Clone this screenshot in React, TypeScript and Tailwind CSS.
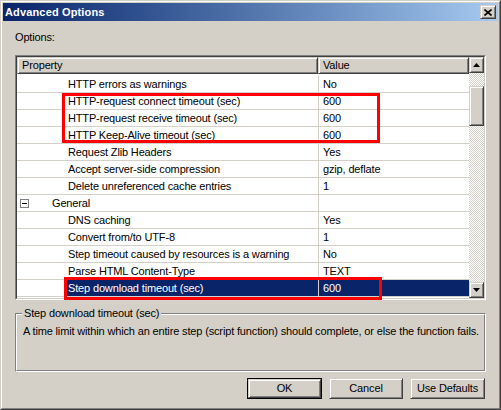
import React from 'react';

type Row = {
  label: string;
  value?: string;
  category?: boolean;
  selected?: boolean;
};

const rows: Row[] = [
  { label: 'HTTP errors as warnings', value: 'No' },
  { label: 'HTTP-request connect timeout (sec)', value: '600' },
  { label: 'HTTP-request receive timeout (sec)', value: '600' },
  { label: 'HTTP Keep-Alive timeout (sec)', value: '600' },
  { label: 'Request Zlib Headers', value: 'Yes' },
  { label: 'Accept server-side compression', value: 'gzip, deflate' },
  { label: 'Delete unreferenced cache entries', value: '1' },
  { label: 'General', category: true },
  { label: 'DNS caching', value: 'Yes' },
  { label: 'Convert from/to UTF-8', value: '1' },
  { label: 'Step timeout caused by resources is a warning', value: 'No' },
  { label: 'Parse HTML Content-Type', value: 'TEXT' },
  { label: 'Step download timeout (sec)', value: '600', selected: true },
];

const raised =
  'border border-t-[#d4d0c8] border-l-[#d4d0c8] border-b-[#404040] border-r-[#404040] shadow-[inset_1px_1px_0_#ffffff,inset_-1px_-1px_0_#808080] bg-[#d4d0c8]';

const checker = 'bg-[repeating-conic-gradient(#d4d0c8_0_25%,#ffffff_0_50%)] bg-[length:2px_2px]';

const Arrow: React.FC<{ down?: boolean }> = ({ down }) => (
  <svg width="7" height="4" viewBox="0 0 7 4">
    {down ? <path d="M0 0h7L3.5 4z" fill="#000" /> : <path d="M0 4h7L3.5 0z" fill="#000" />}
  </svg>
);

const App: React.FC = () => {
  return (
    <div className="w-[501px] h-[410px] bg-[#d4d0c8] font-['Liberation_Sans',Arial,sans-serif] text-[11px] leading-[13px] tracking-[-0.15px] text-black relative">
      <div className="h-full border border-t-[#d4d0c8] border-l-[#d4d0c8] border-b-[#404040] border-r-[#404040]">
        <div className="h-full border border-t-white border-l-white border-b-[#808080] border-r-[#808080] p-px flex flex-col">
          {/* title bar */}
          <div className="h-[18px] bg-gradient-to-r from-[#0a246a] to-[#a6caf0] flex items-center justify-between pl-[2px] pr-[2px]">
            <span className="text-white font-bold tracking-[0.15px]">Advanced Options</span>
            <div className={`w-[16px] h-[14px] flex items-center justify-center ${raised}`}>
              <svg width="8" height="7" viewBox="0 0 8 7">
                <path d="M0.5 0.5l7 6M7.5 0.5l-7 6" stroke="#000" strokeWidth="1.6" />
              </svg>
            </div>
          </div>

          <div className="px-[12px] flex flex-col">
            <div className="mt-[10px] h-[13px]">Options:</div>

            {/* property grid */}
            <div className="mt-[11px] h-[245px] border border-t-[#808080] border-l-[#808080] border-b-white border-r-white">
              <div className="h-full border border-t-[#404040] border-l-[#404040] border-b-[#d4d0c8] border-r-[#d4d0c8] bg-white flex">
                <div className="w-[452px] flex flex-col">
                  <div className="flex h-[17px]">
                    <div className={`w-[301px] pl-[4px] flex items-center ${raised}`}>Property</div>
                    <div className={`w-[151px] pl-[4px] flex items-center ${raised}`}>Value</div>
                  </div>
                  <div className="h-[2px]" />
                  {rows.map((row) => (
                    <div key={row.label} className="flex h-[17px] border-b border-[#d4d0c8]">
                      <div className="w-[301px] flex items-center">
                        {row.category ? (
                          <>
                            <div className="ml-[3px] w-[9px] h-[9px] border border-[#808080] bg-white flex items-center justify-center">
                              <div className="w-[5px] h-px bg-black" />
                            </div>
                            <span className="ml-[23px] pt-px">{row.label}</span>
                          </>
                        ) : (
                          <div
                            className={`ml-[48px] flex-1 h-full pl-[3px] pt-px flex items-center whitespace-nowrap ${
                              row.selected ? 'bg-[#0a246a] text-white' : ''
                            }`}
                          >
                            {row.label}
                          </div>
                        )}
                      </div>
                      <div
                        className={`w-[151px] border-l border-[#d4d0c8] pl-[4px] pt-px flex items-center ${
                          row.selected ? 'bg-[#0a246a] text-white' : ''
                        }`}
                      >
                        {row.value}
                      </div>
                    </div>
                  ))}
                </div>
                {/* scrollbar */}
                <div className="w-[16px] flex flex-col">
                  <div className={`h-[16px] flex items-center justify-center ${raised}`}>
                    <Arrow />
                  </div>
                  <div className={`h-[13px] ${checker}`} />
                  <div className={`h-[40px] ${raised}`} />
                  <div className={`flex-1 ${checker}`} />
                  <div className={`h-[16px] flex items-center justify-center ${raised}`}>
                    <Arrow down />
                  </div>
                </div>
              </div>
            </div>

            {/* description group */}
            <div className="mt-[13px] h-[59px] relative border border-t-[#808080] border-l-[#808080] border-b-white border-r-white">
              <div className="h-full border border-t-white border-l-white border-b-[#808080] border-r-[#808080] pt-[10px] pl-[6px] whitespace-nowrap">
                A time limit within which an entire step (script function) should complete, or else the function fails.
              </div>
              <span className="absolute left-[6px] -top-[7px] px-[2px] bg-[#d4d0c8]">Step download timeout (sec)</span>
            </div>

            {/* buttons */}
            <div className="mt-[6px] flex justify-end gap-[7px] pr-px">
              <div className="w-[75px] h-[21px] border border-black">
                <div className={`h-full flex items-center justify-center ${raised}`}>OK</div>
              </div>
              <div className={`w-[74px] h-[21px] flex items-center justify-center ${raised}`}>Cancel</div>
              <div className={`w-[75px] h-[21px] flex items-center justify-center ${raised}`}>Use Defaults</div>
            </div>
          </div>
        </div>
      </div>

      {/* red annotation frames */}
      <div className="absolute left-[62px] top-[93px] w-[318px] h-[50px] border-[3px] border-[#ff0000]" />
      <div className="absolute left-[64px] top-[277px] w-[318px] h-[23px] border-[3px] border-[#ff0000]" />
    </div>
  );
};

export default App;
